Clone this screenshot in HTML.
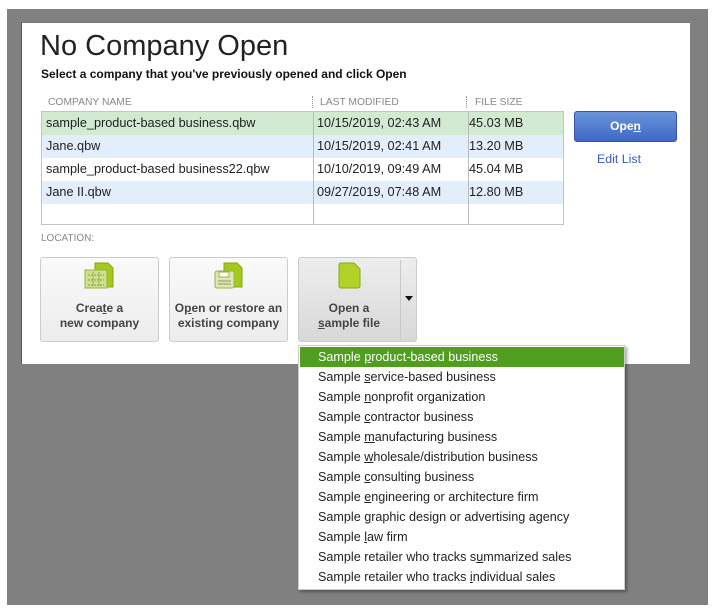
<!DOCTYPE html>
<html><head><style>
body{margin:0;width:716px;height:610px;background:#fff;position:relative;overflow:hidden;font-family:"Liberation Sans",Arial,sans-serif;}
.gray{position:absolute;left:7px;top:9px;width:701px;height:596px;background:#808080;}
.panel{position:absolute;left:21px;top:22px;width:669px;height:342px;background:#fff;border-left:1px solid #555;border-top:1px solid #777;box-sizing:border-box;}
.abs{position:absolute;}
h1{position:absolute;left:40px;top:30px;margin:0;font-weight:normal;font-size:29px;color:#222;}
.sub{left:41px;top:67px;font-size:12px;font-weight:bold;color:#111;}
.hd{top:97px;font-size:10.3px;color:#888;}
.tbl{left:41px;top:111px;width:523px;height:114px;border:1px solid #c4c4c4;box-sizing:border-box;}
.row{position:absolute;left:0;width:521px;height:23px;font-size:12.7px;color:#222;line-height:23px;}
.row span{position:absolute;}
.c1{left:4px}.c2{left:275px}.c3{left:427px}
.vl{position:absolute;top:0;width:1px;height:112px;background:#bbb;}
.btn{position:absolute;top:257px;width:119px;height:85px;border:1px solid #ccc;border-radius:3px;box-sizing:border-box;background:linear-gradient(#fafafa,#ececec);text-align:center;font-size:12px;font-weight:bold;color:#444;}
.btn .t{position:absolute;left:0;right:0;top:43px;line-height:15px;}
.menu{left:298px;top:345px;width:327px;height:245px;background:#fff;border:1px solid #ccc;box-sizing:border-box;box-shadow:2px 2px 3px rgba(0,0,0,.35);}
.mi{position:absolute;left:1px;width:324px;height:20px;line-height:20px;font-size:12.6px;color:#222;padding-left:18px;box-sizing:border-box;}
u{text-decoration:underline;}
</style></head><body>
<div class="gray"></div>
<div class="panel"></div>
<h1>No Company Open</h1>
<div class="abs sub">Select a company that you've previously opened and click Open</div>
<div class="abs hd" style="left:48px">COMPANY NAME</div>
<div class="abs hd" style="left:320px">LAST MODIFIED</div>
<div class="abs hd" style="left:475px">FILE SIZE</div>
<div class="abs" style="left:312px;top:96px;height:12px;border-left:1px dotted #999"></div>
<div class="abs" style="left:466px;top:96px;height:12px;border-left:1px dotted #999"></div>
<div class="abs tbl">
<div class="row" style="top:0;background:#d3ead2"><span class="c1">sample_product-based business.qbw</span><span class="c2">10/15/2019, 02:43 AM</span><span class="c3">45.03 MB</span></div>
<div class="row" style="top:23px;background:#e2eefb"><span class="c1">Jane.qbw</span><span class="c2">10/15/2019, 02:41 AM</span><span class="c3">13.20 MB</span></div>
<div class="row" style="top:46px"><span class="c1">sample_product-based business22.qbw</span><span class="c2">10/10/2019, 09:49 AM</span><span class="c3">45.04 MB</span></div>
<div class="row" style="top:69px;background:#e2eefb"><span class="c1">Jane II.qbw</span><span class="c2">09/27/2019, 07:48 AM</span><span class="c3">12.80 MB</span></div>
<div class="vl" style="left:271px"></div><div class="vl" style="left:426px"></div>
</div>
<div class="abs" style="left:574px;top:111px;width:103px;height:31px;border:1px solid #3556a8;border-radius:3px;box-sizing:border-box;background:linear-gradient(#6a93dc,#3f68c6);color:#fff;font-size:12px;font-weight:bold;text-align:center;line-height:29px;">Ope<u>n</u></div>
<div class="abs" style="left:597px;top:152px;font-size:12.4px;color:#3a5bc4">Edit List</div>
<div class="abs" style="left:41px;top:233px;font-size:10px;color:#888">LOCATION:</div>

<div class="btn" style="left:40px">
<svg class="abs" style="left:42px;top:3px" width="32" height="30"><path d="M12 2h13l5 5v19h-18z" fill="#a5c81e" stroke="#84a812"/><rect x="2" y="9" width="22" height="18" fill="#cfe08a" stroke="#9bb04a"/><path d="M5 14h16M5 19h16M5 24h16M10 11v15M16 11v15" stroke="#8a9a50" stroke-dasharray="2 1"/></svg>
<div class="t">Crea<u>t</u>e a<br>new company</div></div>
<div class="btn" style="left:169px">
<svg class="abs" style="left:42px;top:3px" width="32" height="30"><path d="M12 2h13l5 5v19h-18z" fill="#a5c81e" stroke="#84a812"/><rect x="3" y="10" width="19" height="17" rx="2" fill="#dde8b5" stroke="#9bb04a"/><rect x="7" y="11" width="10" height="5" fill="#fff" stroke="#9bb04a"/><path d="M6 20h13M6 23h13" stroke="#8a9a50"/></svg>
<div class="t">O<u>p</u>en or restore an<br>existing company</div></div>
<div class="btn" style="left:298px;background:linear-gradient(#eee,#d8d8d8)">
<svg class="abs" style="left:38px;top:3px" width="26" height="30"><path d="M4 2h13l6 6v17a2 2 0 0 1-2 2h-17a2 2 0 0 1-2-2v-21a2 2 0 0 1 2-2z" fill="#b2d22a" stroke="#86aa14"/></svg>
<div class="t" style="right:17px">Open a<br><u>s</u>ample file</div>
<div class="abs" style="left:101px;top:2px;width:1px;height:80px;background:#c8c8c8"></div>
<div class="abs" style="left:106px;top:38px;width:0;height:0;border-left:4px solid transparent;border-right:4px solid transparent;border-top:5px solid #111"></div>
</div>

<div class="abs menu">
<div class="mi" style="top:1px;background:#4f9e1d;color:#fff">Sample <u>p</u>roduct-based business</div>
<div class="mi" style="top:21px">Sample <u>s</u>ervice-based business</div>
<div class="mi" style="top:41px">Sample <u>n</u>onprofit organization</div>
<div class="mi" style="top:61px">Sample <u>c</u>ontractor business</div>
<div class="mi" style="top:81px">Sample <u>m</u>anufacturing business</div>
<div class="mi" style="top:101px">Sample <u>w</u>holesale/distribution business</div>
<div class="mi" style="top:121px">Sample <u>c</u>onsulting business</div>
<div class="mi" style="top:141px">Sample <u>e</u>ngineering or architecture firm</div>
<div class="mi" style="top:161px">Sample <u>g</u>raphic design or advertising agency</div>
<div class="mi" style="top:181px">Sample <u>l</u>aw firm</div>
<div class="mi" style="top:201px">Sample retailer who tracks s<u>u</u>mmarized sales</div>
<div class="mi" style="top:221px">Sample retailer who tracks <u>i</u>ndividual sales</div>
</div>
</body></html>
